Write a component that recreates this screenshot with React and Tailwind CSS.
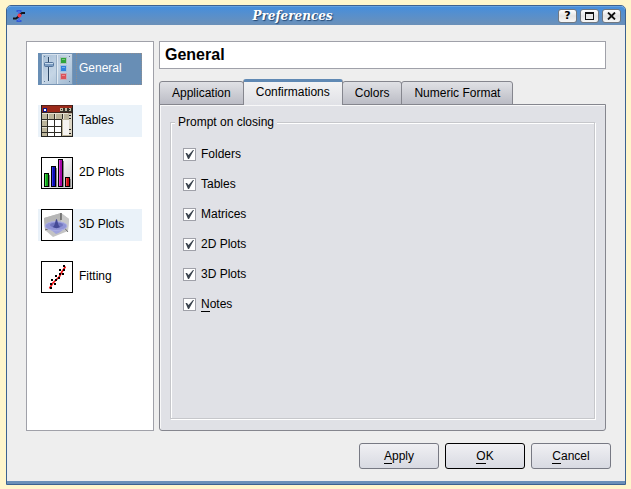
import React from "react";

const underlined = (text) => (
  <>
    <span className="border-b border-current">{text[0]}</span>
    {text.slice(1)}
  </>
);

function AppIcon() {
  return (
    <svg width="14" height="14" viewBox="0 0 14 14" aria-hidden="true">
      <path d="M3.500 2h5M3.500 12h5" stroke="#3158d8" strokeWidth="2" fill="none" />
      <path d="M6 2v10" stroke="#4a6fe0" strokeWidth="2" fill="none" />
      <path d="M0 9.500h3l2-1.500 2-2.500 2-1.500h3" stroke="#10151f" strokeWidth="2" fill="none" />
      <circle cx="6.500" cy="6.500" r="2" fill="#f03a44" />
    </svg>
  );
}

function GeneralIcon() {
  return (
    <svg width="32" height="32" viewBox="0 0 32 32" aria-hidden="true">
      <defs>
        <linearGradient id="mixer" x1="0" y1="0" x2="1" y2="1">
          <stop offset="0" stopColor="#a5bdd5" />
          <stop offset="0.5" stopColor="#c6d6e6" />
          <stop offset="1" stopColor="#9fb8d0" />
        </linearGradient>
      </defs>
      <rect x="0.500" y="0.500" width="31" height="31" fill="url(#mixer)" stroke="#7895b4" />
      <path d="M16.500 1v30" stroke="#e2ebf3" />
      <path d="M15.500 1v30" stroke="#9bb1c8" />
      <path d="M1.500 31v-29.500h29" stroke="#d5e1ed" fill="none" />
      <path d="M7.500 4v24" stroke="#2c4664" />
      <path d="M8.500 4v24" stroke="#dce8f3" strokeWidth="0.500" />
      <rect x="3.500" y="9.500" width="9" height="4" rx="1" fill="#7d9ec3" stroke="#53739b" />
      <path d="M4 10.500h8" stroke="#c9dced" />
      <path d="M3 3.500h1M28 3.500h1M3 28.500h1M28 28.500h1" stroke="#607a98" />
      <rect x="19.500" y="4.500" width="6" height="6" fill="#2da43a" stroke="#a9c4bd" />
      <rect x="19.500" y="12.500" width="6" height="6" fill="#2e82dc" stroke="#a4c1df" />
      <rect x="19.500" y="20.500" width="6" height="6" fill="#db535a" stroke="#c9a9b6" />
      <path d="M21 6.500h3M21 14.500h3M21 22.500h3" stroke="#fff" opacity="0.350" />
    </svg>
  );
}

function TablesIcon() {
  return (
    <svg width="32" height="32" viewBox="0 0 32 32" shapeRendering="crispEdges" aria-hidden="true">
      <rect width="32" height="32" fill="#bcb59b" />
      <rect width="32" height="8" fill="#9c2a1a" />
      <rect width="32" height="1" fill="#5b2018" />
      <rect y="7" width="32" height="1" fill="#42271f" />
      <rect x="2" y="3" width="4" height="4" fill="#12168a" />
      <rect x="3" y="4" width="2" height="2" fill="#fff" />
      <path d="M19 3h4v4h-4zM23 3h4v4h-4zM27 3h4v4h-4z" fill="#35332a" />
      <path d="M19 3h3v3h-3zM24 3h2v3h-2zM28 3h2v3h-2z" fill="#c5bda4" />
      <path d="M20 4h1v1h-1zM28 4h1v1h-1z" fill="#222" />
      <rect x="7" y="15" width="14" height="16" fill="#fff" />
      <rect x="22" y="15" width="6" height="15" fill="#f6f4f1" />
      <path d="M6 8h1v23h-1zM13 8h1v23h-1zM21 8h1v6h-1zM20 14h1v17h-1z" fill="#302e27" />
      <path d="M1 14h20v1h-20zM1 21h20v1h-20zM1 27h20v1h-20z" fill="#302e27" />
      <path d="M1 8h26v1h-26zM1 15h5v1h-5zM1 22h5v1h-5zM7 8h1v6h-1zM14 8h1v6h-1zM22 8h1v6h-1z" fill="#e6e1d2" />
      <path d="M28 9h3v21h-3z" fill="#dcd6c5" />
      <path d="M28 10h2v1h-2zM28 13h2v1h-2zM28 24h2v1h-2zM28 28h2v1h-2z" fill="#222" />
      <path d="M0 0h1v32h-1zM31 0h1v32h-1zM0 31h32v1h-32z" fill="#222" />
    </svg>
  );
}

function BarsIcon() {
  return (
    <svg width="32" height="32" viewBox="0 0 32 32" shapeRendering="crispEdges" aria-hidden="true">
      <defs>
        <linearGradient id="paper" x1="0" y1="0" x2="1" y2="1">
          <stop offset="0.300" stopColor="#fff" />
          <stop offset="1" stopColor="#c4c4c4" />
        </linearGradient>
      </defs>
      <rect x="0.500" y="0.500" width="31" height="31" fill="url(#paper)" stroke="#000" />
      <path d="M8 18h1v12h-1zM15 11h1v19h-1zM22 4h1v26h-1zM29 22h1v8h-1z" fill="#888" />
      <rect x="3.500" y="16.500" width="4" height="13" fill="#12a01a" stroke="#000" />
      <rect x="10.500" y="9.500" width="4" height="20" fill="#0b0bb4" stroke="#000" />
      <rect x="17.500" y="2.500" width="4" height="27" fill="#a808a8" stroke="#000" />
      <rect x="24.500" y="20.500" width="4" height="9" fill="#c90d13" stroke="#000" />
      <path d="M4 17h1v12h-1z" fill="#3fdc48" />
      <path d="M11 10h1v19h-1z" fill="#3434ea" />
      <path d="M18 3h1v26h-1z" fill="#e040e0" />
      <path d="M25 21h1v8h-1z" fill="#f04848" />
    </svg>
  );
}

function SurfaceIcon() {
  return (
    <svg width="32" height="32" viewBox="0 0 32 32" aria-hidden="true">
      <rect x="0.500" y="0.500" width="31" height="31" fill="#fff" stroke="#000" />
      <path d="M3 9l17-5 8 6-1 12-15 6-8-7z" fill="#c4c4c4" />
      <path d="M3 9l17-5v11l-16 6z" fill="#b6b6b6" />
      <path d="M20 4l8 6-1 12-7-7z" fill="#c9c9c9" />
      <path d="M20 15l7 8M7 20l-3 1" stroke="#555" strokeWidth="0.800" fill="none" />
      <path d="M20 4v7" stroke="#333" strokeWidth="1" />
      <path d="M7 19c3 1 5 4 8 6 4-1 6-4 9-5z" fill="#a0a3dc" />
      <ellipse cx="15" cy="17" rx="11" ry="4.500" fill="#9195d6" stroke="#b0b3e6" strokeWidth="0.800" />
      <ellipse cx="15.500" cy="16" rx="6.500" ry="2.500" fill="#7277c0" />
      <path d="M11.500 18c3-1 2.500-7 4-8 1.500 1 1 7 4 8-2.500 1.500-5.500 1.500-8 0z" fill="#454a96" />
    </svg>
  );
}

function FittingIcon() {
  return (
    <svg width="32" height="32" viewBox="0 0 32 32" aria-hidden="true">
      <rect x="0.500" y="0.500" width="31" height="31" fill="#fff" stroke="#000" />
      <path d="M8.500 27.500l3-5 4-4 3-3 2-4 2-3 2-3" stroke="#f01010" strokeWidth="1.700" fill="none" />
      <path
        d="M9 26h2v2h-2zM9 22h2v2h-2zM10 18h2v2h-2zM13 22h2v2h-2zM14 18h2v2h-2zM14 14h2v2h-2zM17 16h2v2h-2zM18 12h2v2h-2zM18 8h2v2h-2zM21 12h2v2h-2zM22 8h2v2h-2zM22 4h2v2h-2z"
        fill="#000"
      />
    </svg>
  );
}

const pages = [
  { name: "General", Icon: GeneralIcon, look: "bg-[#688eb5] text-white" },
  { name: "Tables", Icon: TablesIcon, look: "bg-[#eaf2f9]" },
  { name: "2D Plots", Icon: BarsIcon, look: "bg-white" },
  { name: "3D Plots", Icon: SurfaceIcon, look: "bg-[#eaf2f9]" },
  { name: "Fitting", Icon: FittingIcon, look: "bg-white" },
];

function TitleButton({ label, children }) {
  return (
    <button
      aria-label={label}
      className="flex h-[14px] w-[19px] items-center justify-center rounded-[3px] border border-[#717880] bg-linear-to-b from-white via-[#e4e4e4] to-[#f7f7f7] text-black"
    >
      {children}
    </button>
  );
}

function TitleBar() {
  return (
    <header className="flex h-[19px] items-center rounded-t-[4px] border-t border-[#67a2df] bg-linear-to-b from-[#468edb] to-[#6b90b8] pr-1 pl-[6px]">
      <AppIcon />
      <h1 className="flex-1 text-center font-['DejaVu_Serif',serif] text-[12px] leading-4 font-bold text-white italic [text-shadow:1px_1px_1px_#23466f]">
        Preferences
      </h1>
      <div className="flex gap-[3px]">
        <TitleButton label="Help">
          <span className="font-['DejaVu_Sans',sans-serif] text-[11px] leading-3 font-bold">?</span>
        </TitleButton>
        <TitleButton label="Maximize">
          <svg width="9" height="8" viewBox="0 0 9 8" shapeRendering="crispEdges" aria-hidden="true">
            <path d="M0.500 0v7.500h8V0" fill="none" stroke="#111" />
            <path d="M0 1h9" stroke="#111" strokeWidth="2" />
          </svg>
        </TitleButton>
        <TitleButton label="Close">
          <svg width="9" height="8" viewBox="0 0 9 8" aria-hidden="true">
            <path d="M1 0.500l7 7M8 0.500l-7 7" stroke="#111" strokeWidth="1.800" />
          </svg>
        </TitleButton>
      </div>
    </header>
  );
}

function PageList() {
  return (
    <nav className="w-32 shrink-0 border border-[#a0a1a9] bg-white px-[11px] pt-[11px]">
      <ul className="flex flex-col gap-5">
        {pages.map(({ name, Icon, look }, i) => (
          <li key={name}>
            <button className={`flex h-8 w-full items-center pl-[3px] text-left ${look}`}>
              <Icon />
              <span
                className={`ml-[3px] flex h-8 flex-1 items-center border border-dotted pb-[2px] pl-[2px] ${
                  i === 0 ? "border-[#8d8d91]" : "border-transparent"
                }`}
              >
                {name}
              </span>
            </button>
          </li>
        ))}
      </ul>
    </nav>
  );
}

const tabs = ["Application", "Confirmations", "Colors", "Numeric Format"];

function TabRow() {
  return (
    <div role="tablist" className="relative z-10 -mb-px flex items-end">
      {tabs.map((tab) =>
        tab === "Confirmations" ? (
          <button
            key={tab}
            role="tab"
            aria-selected="true"
            className="-ml-px h-[26px] rounded-t-[3px] border-x border-t-[3px] border-x-[#85868e] border-t-[#6089b4] bg-linear-to-b from-[#f3f3f4] to-[#e0e1e6] px-3 pb-[3px]"
          >
            {tab}
          </button>
        ) : (
          <button
            key={tab}
            role="tab"
            aria-selected="false"
            className="-ml-px h-6 rounded-t-[3px] border border-[#85868e] bg-linear-to-b from-[#e0e1e5] to-[#bbbcc5] px-3 pb-px first:ml-0"
          >
            {tab}
          </button>
        )
      )}
    </div>
  );
}

const prompts = [
  { name: "Folders" },
  { name: "Tables" },
  { name: "Matrices" },
  { name: "2D Plots" },
  { name: "3D Plots" },
  { name: "Notes", shortcut: true },
];

function Prompt({ name, shortcut }) {
  return (
    <label className="flex items-center gap-[5px]">
      <span className="relative flex h-[13px] w-[13px]">
        <input
          type="checkbox"
          defaultChecked
          className="peer h-[13px] w-[13px] appearance-none border border-[#a0a1a9] bg-white"
        />
        <svg
          width="13"
          height="13"
          viewBox="0 0 13 13"
          className="pointer-events-none absolute inset-0 hidden peer-checked:block"
          aria-hidden="true"
        >
          <path d="M2.500 5l1.500 0 1.500 2 4.500-5 1 0-5 9-1 0z" fill="#3b444e" />
        </svg>
      </span>
      <span className="leading-[14px]">{shortcut ? underlined(name) : name}</span>
    </label>
  );
}

function TabPanel() {
  return (
    <div
      role="tabpanel"
      className="flex flex-1 rounded-b-[3px] border border-[#85868e] bg-[#e0e1e6] px-[10px] pt-2 pb-[11px] shadow-[inset_1px_1px_0_#f8f8f9]"
    >
      <fieldset className="flex-1 border border-[#c6c7cb] px-3 shadow-[inset_1px_1px_0_#fff,1px_1px_0_#fff]">
        <legend className="relative -ml-2 bg-[#e0e1e6] px-[3px] leading-[18px]">Prompt on closing</legend>
        <div className="flex flex-col gap-4 pt-4">
          {prompts.map((prompt) => (
            <Prompt key={prompt.name} {...prompt} />
          ))}
        </div>
      </fieldset>
    </div>
  );
}

function DialogButton({ label, primary }) {
  return (
    <button
      className={`h-[26px] w-20 rounded-[3px] border bg-linear-to-b from-[#f0f0f3] to-[#d8dae2] pb-px leading-[14px] ${
        primary ? "border-black" : "border-[#777983]"
      }`}
    >
      {underlined(label)}
    </button>
  );
}

export default function App() {
  return (
    <div className="flex min-h-screen flex-col bg-[#fff6cc] pt-[5px] pr-[5px] pb-1 pl-[6px] font-['Liberation_Sans',Arial,sans-serif] text-[12px] leading-4 text-black">
      <div className="flex flex-1 flex-col rounded-t-[5px] border border-[#3c6291] bg-[#eeeeee]">
        <TitleBar />
        <div className="flex flex-1 gap-[5px] px-[19px] pt-4">
          <PageList />
          <main className="flex min-w-0 flex-1 flex-col">
            <h2 className="mb-[10px] h-7 border border-[#a0a1a9] bg-white px-[5px] text-[16px] leading-[26px] font-bold">
              General
            </h2>
            <TabRow />
            <TabPanel />
          </main>
        </div>
        <footer className="flex justify-end gap-[6px] border-b-[3px] border-[#6b90b8] pt-3 pr-[14px] pb-3">
          <DialogButton label="Apply" />
          <DialogButton label="OK" primary />
          <DialogButton label="Cancel" />
        </footer>
      </div>
    </div>
  );
}
